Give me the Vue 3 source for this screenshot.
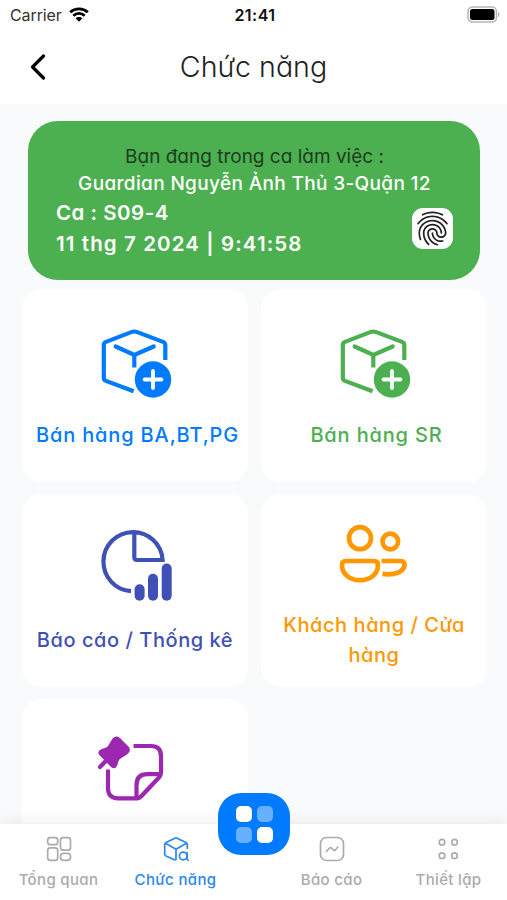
<template>
  <div class="screen">
    <div class="status-bar">
      <div class="carrier">
        <span>Carrier</span>
        <svg class="wifi" viewBox="0 0 20 15">
          <path d="M1.2 5.2C6 .8 14 .8 18.8 5.2M4.3 8.7c3.2-3 8.2-3 11.4 0" fill="none" stroke="#000" stroke-width="2.7" />
          <path d="M6.6 11.3c1.9-1.8 4.9-1.8 6.8 0L10 14.8z" fill="#000" />
        </svg>
      </div>
      <span class="clock">21:41</span>
      <svg class="battery" viewBox="0 0 33 17">
        <rect x="1" y="1" width="28.5" height="15" rx="4.5" fill="#fff" stroke="#b5b5b5" stroke-width="1.5" />
        <rect x="3" y="3" width="24.5" height="11" rx="2.5" fill="#000" />
        <path d="M31 6v5q1.6-.8 1.6-2.5T31 6z" fill="#b5b5b5" />
      </svg>
    </div>

    <header class="header">
      <button class="back" aria-label="Back">
        <svg viewBox="0 0 18 28">
          <path d="M14.5 3 3.5 14l11 11" fill="none" stroke="#000" stroke-width="3.2" stroke-linecap="round" stroke-linejoin="round" />
        </svg>
      </button>
      <h1>Chức năng</h1>
    </header>

    <main class="content">
      <section class="shift-card">
        <p class="shift-note">Bạn đang trong ca làm việc :</p>
        <p class="shift-store">Guardian Nguyễn Ảnh Thủ 3-Quận 12</p>
        <div class="shift-row">
          <div class="shift-info">
            <p class="shift-code">Ca : S09-4</p>
            <p class="shift-time">11 thg 7 2024 | 9:41:58</p>
          </div>
          <button class="fingerprint" aria-label="Check in">
            <svg viewBox="0 0 24 24">
              <path fill="#222" d="M17.81 4.47c-.08 0-.16-.02-.23-.06C15.66 3.42 14 3 12.01 3c-1.98 0-3.86.47-5.57 1.41-.24.13-.54.04-.68-.2-.13-.24-.04-.55.2-.68C7.82 2.52 9.86 2 12.01 2c2.13 0 3.99.47 6.03 1.52.25.13.34.43.21.67-.09.18-.26.28-.44.28zM3.5 9.72c-.1 0-.2-.03-.29-.09-.23-.16-.28-.47-.12-.7.99-1.4 2.25-2.5 3.75-3.27C9.98 4.04 14 4.03 17.15 5.65c1.5.77 2.76 1.86 3.75 3.25.16.22.11.54-.12.7-.23.16-.54.11-.7-.12-.9-1.26-2.04-2.25-3.39-2.94-2.87-1.47-6.54-1.47-9.4.01-1.36.7-2.5 1.7-3.4 2.96-.08.14-.23.21-.39.21zm6.25 12.07c-.13 0-.26-.05-.35-.15-.87-.87-1.34-1.43-2.01-2.64-.69-1.23-1.05-2.73-1.05-4.34 0-2.97 2.54-5.39 5.66-5.39s5.66 2.42 5.66 5.39c0 .28-.22.5-.5.5s-.5-.22-.5-.5c0-2.42-2.09-4.39-4.66-4.39-2.57 0-4.66 1.97-4.66 4.39 0 1.44.32 2.77.93 3.85.64 1.15 1.08 1.64 1.85 2.42.19.2.19.51 0 .71-.11.1-.24.15-.37.15zm7.17-1.85c-1.19 0-2.24-.3-3.1-.89-1.49-1.01-2.38-2.65-2.38-4.39 0-.28.22-.5.5-.5s.5.22.5.5c0 1.41.72 2.74 1.94 3.56.71.48 1.54.71 2.54.71.24 0 .64-.03 1.04-.1.27-.05.53.13.58.41.05.27-.13.53-.41.58-.57.11-1.07.12-1.21.12zM14.91 22c-.04 0-.09-.01-.13-.02-1.59-.44-2.63-1.03-3.72-2.1-1.4-1.39-2.17-3.24-2.17-5.22 0-1.62 1.38-2.94 3.08-2.94 1.7 0 3.08 1.32 3.08 2.94 0 1.07.93 1.94 2.08 1.94s2.08-.87 2.08-1.94c0-3.77-3.25-6.83-7.25-6.83-2.84 0-5.44 1.58-6.61 4.03-.39.81-.59 1.76-.59 2.8 0 .78.07 2.01.67 3.61.1.26-.03.55-.29.64-.26.1-.55-.04-.64-.29-.49-1.31-.73-2.61-.73-3.96 0-1.2.23-2.29.68-3.24 1.33-2.79 4.28-4.6 7.51-4.6 4.55 0 8.25 3.51 8.25 7.83 0 1.62-1.38 2.94-3.08 2.94s-3.08-1.32-3.08-2.94c0-1.07-.93-1.94-2.08-1.94s-2.08.87-2.08 1.94c0 1.71.66 3.31 1.87 4.51.95.94 1.86 1.46 3.27 1.85.27.07.42.35.35.61-.05.23-.26.38-.47.38z" />
            </svg>
          </button>
        </div>
      </section>

      <section class="grid">
        <article v-for="item in features" :key="item.id" class="tile" :class="item.color">
          <svg class="tile-icon" viewBox="0 0 80 80">
            <g v-if="item.icon === 'box'">
              <path class="line" d="M38.6 70.3 11 59.9q-2.2-.9-2.2-3.2V24q0-2.3 2.2-3.1L36.3 11.1q3-1.2 6 0L68 20.9q2.3.9 2.3 3.1V39" />
              <path class="line round" d="M20.7 25.5 39.3 34l19.4-8.5" />
              <path class="line" d="M39.3 34v12.5" />
              <circle class="solid" cx="58" cy="58.5" r="18.2" />
              <path class="plus" d="M58 50v17M49.5 58.5h17" />
            </g>
            <g v-else-if="item.icon === 'chart'">
              <path class="line" d="M36 65.2A29.6 29.6 0 1 1 67.6 34H42q-2.7 0-2.7-2.7V6" />
              <rect class="solid" x="39.6" y="58.2" width="10" height="16.6" rx="5" />
              <rect class="solid" x="53" y="47.8" width="10" height="27" rx="5" />
              <rect class="solid" x="66.7" y="37.5" width="10" height="37.3" rx="5" />
            </g>
            <g v-else-if="item.icon === 'people'">
              <circle class="line bold" cx="26" cy="27.2" r="11" />
              <circle class="line bold" cx="56.3" cy="30.5" r="7.8" />
              <path class="line bold" d="M12 50h28q4 0 4 4c0 9-7.500 15.200-18 15.200S8 63 8 54q0-4 4-4z" />
              <path class="line bold" d="M47.5 50H66q4.500 0 4.500 3.500c0 7-9 11.200-22 9.400" />
            </g>
            <g v-else>
              <path class="line" d="M38.5 15H56q10 0 10 10v16.500q0 3-2 5L46.500 65q-2 2.300-5 2.300H23q-10 0-10-10V38.500" />
              <path class="line" d="M66 43.200H52.500q-11 0-11 11v13" />
              <path class="solid" d="M17.500 7.500q4-4 8 0l8.200 8.200q3 4-1.400 7.600l-6.700 4.200q-1.700 1-2.200 3l-1.200 4q-2.200 4.600-6.200 1.400L4.200 24q-2.400-4 2-5.800l4.300-1.500q2-.7 3-2.500z" />
              <path class="line round" d="m5 36 6-6.300" />
            </g>
          </svg>
          <p class="tile-label" :class="item.spacing">{{ item.label }}</p>
        </article>
      </section>
    </main>

    <nav class="tab-bar">
      <a class="tab">
        <svg class="tab-icon" viewBox="0 0 26 26">
          <rect x="1.7" y="1.7" width="10" height="7" rx="2.5" />
          <rect x="1.7" y="11.8" width="10" height="12.5" rx="2.5" />
          <rect x="14.5" y="1.7" width="10" height="12.5" rx="2.5" />
          <rect x="14.5" y="17.3" width="10" height="7" rx="3" />
        </svg>
        <span>Tổng quan</span>
      </a>
      <a class="tab active">
        <svg class="tab-icon" viewBox="0 0 26 26">
          <path d="M12.5 24.300 3 20q-1.300-.7-1.300-2V8.500q0-1.300 1.300-2l9-4.300q1-.5 2 0l9 4.300q1.300.7 1.300 2V13M2.500 7.300 13 13.200l10.500-5.900M13 13.200v11" />
          <circle cx="20.200" cy="20" r="3.800" />
          <path d="M24 16v7q0 1.300 1.800 1.300" />
        </svg>
        <span>Chức năng</span>
      </a>
      <div class="tab-gap">
        <button class="fab" aria-label="Menu">
          <i></i><i class="dim"></i><i class="dim"></i><i></i>
        </button>
      </div>
      <a class="tab">
        <svg class="tab-icon" viewBox="0 0 26 26">
          <rect x="1.5" y="1.5" width="23" height="23" rx="6" />
          <path d="M7 15.800l3.500-3.800q1-.9 2 0l1.800 2q1 .9 2 0l3-3.500" />
        </svg>
        <span>Báo cáo</span>
      </a>
      <a class="tab">
        <svg class="tab-icon" viewBox="0 0 26 26">
          <circle v-for="dot in dots" :key="dot.join()" :cx="dot[0]" :cy="dot[1]" r="2.8" />
        </svg>
        <span>Thiết lập</span>
      </a>
    </nav>
  </div>
</template>

<script setup>
const features = [
  { id: 1, icon: 'box', color: 'blue', spacing: 'wide', label: 'Bán hàng BA,BT,PG' },
  { id: 2, icon: 'box', color: 'green', spacing: 'wide', label: 'Bán hàng SR' },
  { id: 3, icon: 'chart', color: 'indigo', spacing: 'normal', label: 'Báo cáo / Thống kê' },
  { id: 4, icon: 'people', color: 'orange', spacing: 'normal', label: 'Khách hàng / Cửa hàng' },
  { id: 5, icon: 'note', color: 'purple', spacing: 'normal', label: '' }
];

const dots = [[6, 6.2], [18.5, 6.2], [6, 19.7], [18.5, 19.7]];
</script>

<style>
body {
  margin: 0;
}
</style>

<style scoped>
.screen {
  width: 507px;
  height: 900px;
  display: flex;
  flex-direction: column;
  overflow: hidden;
  background: #fff;
  font-family: Inter, "Noto Sans", sans-serif;
  font-feature-settings: "cv11";
}

p,
h1 {
  margin: 0;
}

button {
  border: none;
  padding: 0;
  background: none;
}

svg {
  display: block;
}

.status-bar {
  height: 29px;
  flex: none;
  display: grid;
  grid-template-columns: 1fr auto 1fr;
  align-items: center;
  padding: 0 7px 0 10px;
  font-size: 16px;
  color: #111;
  font-feature-settings: normal;
}

.carrier {
  display: flex;
  align-items: center;
  gap: 7px;
  color: #333;
  letter-spacing: -0.1px;
}

.wifi {
  width: 20px;
  height: 15px;
}

.clock {
  font-weight: 600;
  letter-spacing: 0.5px;
}

.battery {
  width: 33px;
  height: 17px;
  justify-self: end;
}

.header {
  height: 75px;
  flex: none;
  display: grid;
  grid-template-columns: 60px 1fr 60px;
  align-items: center;
}

.back {
  justify-self: end;
  margin-right: 13px;
}

.back svg {
  width: 18px;
  height: 28px;
}

h1 {
  text-align: center;
  font-size: 28.6px;
  line-height: 40px;
  font-weight: 300;
  color: #222;
}

.content {
  flex: 1;
  min-height: 0;
  overflow: hidden;
  background: #f8fafc;
  padding: 17px 20px 0 22px;
}

.shift-card {
  box-sizing: border-box;
  height: 159px;
  margin: 0 7px 9px 6px;
  padding: 22px 27px 0 28px;
  border-radius: 30px;
  background: #4caf50;
  color: #fff;
}

.shift-note,
.shift-store {
  text-align: center;
  line-height: 27px;
  font-size: 19px;
  white-space: nowrap;
}

.shift-note {
  color: #1d3d1f;
}

.shift-store {
  font-weight: 550;
  letter-spacing: 0.35px;
}

.shift-row {
  display: flex;
  justify-content: space-between;
  align-items: center;
}

.shift-info p {
  font-size: 20.5px;
  line-height: 31px;
  font-weight: 570;
}

.shift-code {
  letter-spacing: 0.5px;
}

.shift-time {
  letter-spacing: 1.1px;
}

.fingerprint {
  width: 41px;
  height: 41px;
  border-radius: 11px;
  background: #fff;
}

.grid {
  display: grid;
  grid-template-columns: 226px 226px;
  grid-auto-rows: 193px;
  gap: 12px 13px;
}

.tile {
  display: flex;
  flex-direction: column;
  align-items: center;
  justify-content: center;
  gap: 19px;
  border-radius: 20px;
  background: #fff;
}

.tile-icon {
  width: 80px;
  height: 80px;
}

.line {
  fill: none;
  stroke: currentColor;
  stroke-width: 4.2;
}

.line.bold {
  stroke-width: 4.7;
}

.round {
  stroke-linecap: round;
}

.solid {
  fill: currentColor;
}

.plus {
  stroke: #fff;
  stroke-width: 3.8;
  stroke-linecap: round;
}

.tile-label {
  min-height: 30px;
  max-width: 210px;
  text-align: center;
  font-size: 20px;
  line-height: 30px;
  font-weight: 550;
}

.wide {
  padding-left: 5px;
  letter-spacing: 0.85px;
}

.normal {
  letter-spacing: 0.55px;
}

.blue {
  color: #007bff;
}

.green {
  color: #4caf50;
}

.indigo {
  color: #3f51b5;
}

.orange {
  color: #ff9800;
}

.purple {
  color: #9c27b0;
}

.tab-bar {
  position: relative;
  height: 76px;
  flex: none;
  display: grid;
  grid-template-columns: 117px 117px 39px 117px 117px;
  background: #fff;
  box-shadow: 0 0 16px rgba(0, 0, 0, 0.09);
}

.tab {
  display: flex;
  flex-direction: column;
  align-items: center;
  padding-top: 12px;
  gap: 7px;
  color: #ababab;
  font-size: 15px;
  line-height: 22px;
  font-weight: 550;
  letter-spacing: 0.35px;
}

.tab.active {
  color: #2b86f5;
}

.tab-icon {
  width: 26px;
  height: 26px;
  fill: none;
  stroke: currentColor;
  stroke-width: 1.7;
}

.tab-gap {
  position: relative;
}

/* floats over the bar's top edge */
.fab {
  position: absolute;
  left: -16px;
  top: -31px;
  width: 72px;
  height: 62px;
  border-radius: 23px;
  background: #007bff;
  display: grid;
  grid-template-columns: 16px 16px;
  grid-auto-rows: 16px;
  gap: 5px;
  place-content: center;
}

.fab i {
  border-radius: 5px;
  background: #fff;
}

.fab .dim {
  background: #66b0ff;
}
</style>
